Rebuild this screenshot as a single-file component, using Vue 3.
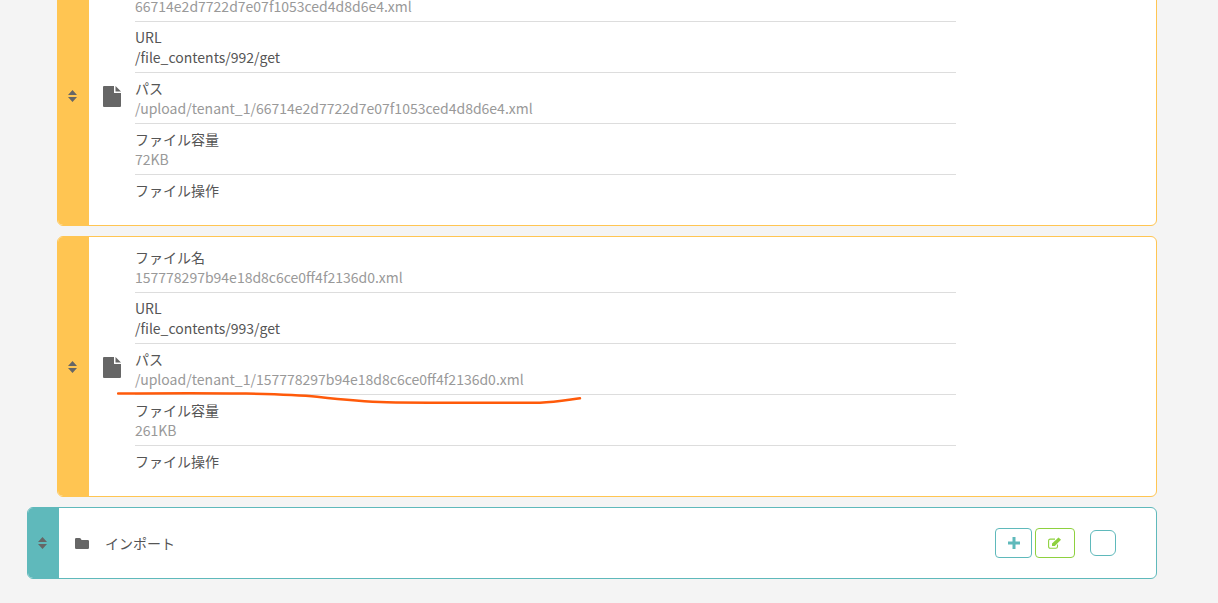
<script setup>
const cards = [
  { name: '66714e2d7722d7e07f1053ced4d8d6e4.xml', id: 992, size: '72KB' },
  { name: '157778297b94e18d8c6ce0ff4f2136d0.xml', id: 993, size: '261KB' }
]
</script>

<template>
  <div class="page">
    <div v-for="c in cards" :key="c.id" class="card">
      <div class="strip">
        <svg class="sort" width="9" height="12" viewBox="0 0 9 12"><path d="M4.500 0 9 5H0zM0 7h9L4.500 12z" fill="#666" /></svg>
      </div>
      <div class="file-icon">
        <svg width="18" height="21" viewBox="0 0 18 21">
          <path d="M0 1Q0 0 1 0H11V6.500Q11 7 11.500 7H18V20Q18 21 17 21H1Q0 21 0 20Z" fill="#666" />
          <path d="M12.500 0 18 5.500H12.500Z" fill="#666" />
        </svg>
      </div>
      <div class="rows">
        <div class="row"><div class="label">ファイル名</div><div class="value">{{ c.name }}</div></div>
        <div class="row"><div class="label">URL</div><div class="value dark">/file_contents/{{ c.id }}/get</div></div>
        <div class="row"><div class="label">パス</div><div class="value">/upload/tenant_1/{{ c.name }}</div></div>
        <div class="row"><div class="label">ファイル容量</div><div class="value">{{ c.size }}</div></div>
        <div class="row last"><div class="label">ファイル操作</div></div>
      </div>
    </div>

    <div class="folder-card">
      <div class="strip teal">
        <svg class="sort" width="9" height="12" viewBox="0 0 9 12"><path d="M4.500 0 9 5H0zM0 7h9L4.500 12z" fill="#666" /></svg>
      </div>
      <svg class="folder" width="14" height="11" viewBox="0 0 14 11"><path d="M0 1.200Q0 0 1.200 0H4.500Q5.500 0 6 1L6.500 2H12.800Q14 2 14 3.200V9.800Q14 11 12.800 11H1.200Q0 11 0 9.800Z" fill="#666" /></svg>
      <span class="folder-name">インポート</span>
      <div class="actions">
        <button class="btn add" type="button">
          <svg width="12" height="12" viewBox="0 0 12 12"><path d="M4.500 0h3v4.500H12v3H7.500V12h-3V7.500H0v-3h4.500z" fill="#5fb9bb" /></svg>
        </button>
        <button class="btn edit" type="button">
          <svg width="14" height="12" viewBox="0 0 14 12">
            <path d="M9.500 7.500V9.500Q9.500 11.300 7.700 11.300H2.300Q.6 11.300.6 9.500V3.800Q.6 2.100 2.300 2.100H7" fill="none" stroke="#8ed13f" stroke-width="1.100" />
            <path d="M4 6.500 10.500.5 13 2.800 6.800 9H4z" fill="#8ed13f" />
          </svg>
        </button>
        <span class="check"></span>
      </div>
    </div>

    <svg class="scribble" width="470" height="16" viewBox="0 0 470 16">
      <path d="M1 2.500C40 2.200 90 2 126 2.500 150 3 178 3.500 200 5.700 225 8.500 250 10.700 270 11.200 320 12 380 11.700 423 11.700 438 11.200 450 9 463 7.300" fill="none" stroke="#ff5a0a" stroke-width="2.400" stroke-linecap="round" />
    </svg>
  </div>
</template>

<style>
html, body { margin: 0; background: #f4f4f4; overflow: hidden; }
</style>

<style scoped>
.page {
  position: relative;
  width: 1218px;
  height: 603px;
  overflow: hidden;
  background: #f4f4f4;
  font-family: "Noto Sans CJK JP", "Noto Sans", sans-serif;
  font-size: 14px;
  color: #555;
}
.card {
  box-sizing: border-box;
  display: flex;
  align-items: stretch;
  width: 1100px;
  height: 261px;
  margin: 10px 0 0 57px;
  background: #fff;
  border: 1px solid #ffc552;
  border-radius: 6px;
  overflow: hidden;
}
.card:first-child { margin-top: -35px; }
.strip {
  flex: none;
  box-sizing: border-box;
  display: flex;
  align-items: center;
  justify-content: center;
  width: 31px;
  padding-right: 3px;
  background: #ffc552;
}
.strip.teal { background: #5fb9bb; }
.file-icon {
  flex: none;
  display: flex;
  align-items: center;
  width: 32px;
  margin-left: 14px;
  padding-top: 2px;
}
.rows {
  flex: none;
  width: 821px;
  padding-top: 5px;
}
.row {
  box-sizing: border-box;
  height: 51px;
  padding-top: 5px;
  border-bottom: 1px solid #ddd;
  line-height: 21px;
}
.row.last { border-bottom: 0; }
.label { height: 20px; white-space: nowrap; }
.value { height: 21px; white-space: nowrap; color: #999; }
.value.dark { color: #555; }
.folder-card {
  box-sizing: border-box;
  display: flex;
  align-items: center;
  width: 1130px;
  height: 72px;
  margin: 10px 0 0 27px;
  background: #fff;
  border: 1px solid #5fb9bb;
  border-radius: 6px;
  overflow: hidden;
}
.folder-card .strip { align-self: stretch; }
.folder { flex: none; margin-left: 16px; }
.folder-name { margin-left: 16px; }
.actions {
  display: flex;
  align-items: center;
  margin-left: auto;
  margin-right: 40px;
}
.btn {
  box-sizing: border-box;
  display: flex;
  align-items: center;
  justify-content: center;
  height: 30px;
  padding: 0;
  background: #fff;
  border: 1px solid;
  border-radius: 4px;
}
.add { width: 37px; border-color: #5fb9bb; }
.edit { width: 40px; margin-left: 3px; border-color: #8ed13f; }
.check {
  box-sizing: border-box;
  width: 26px;
  height: 26px;
  margin-left: 15px;
  border: 1px solid #5fb9bb;
  border-radius: 6px;
}
.scribble {
  position: absolute;
  left: 117px;
  top: 391px;
}
</style>
